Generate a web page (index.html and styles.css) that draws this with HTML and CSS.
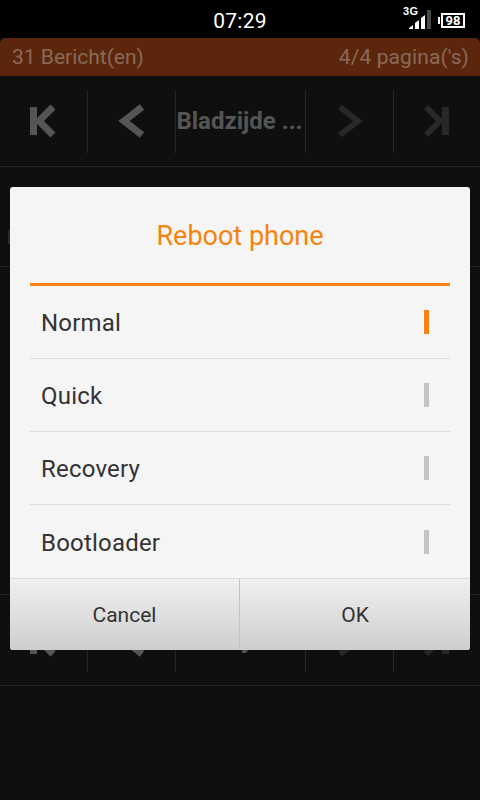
FILE: index.html
```html
<!DOCTYPE html>
<html lang="nl">
<head>
  <meta charset="UTF-8" />
  <meta name="viewport" content="width=device-width, initial-scale=1.0" />
  <title>Reboot phone</title>
  <link rel="stylesheet" href="styles.css">
</head>
<body>

  <div class="status-bar">
    <span class="clock">07:29</span>
    <div class="status-icons">
      <span class="net-type">3G</span>
      <svg class="signal" width="24" height="19" viewBox="0 0 24 19">
        <path d="M1 19v-1l4-3v4z" fill="#fff"/>
        <path d="M7 19v-6l4-3v9z" fill="#fff"/>
        <path d="M13 19V8l4-3v14z" fill="#fff"/>
        <rect x="19" y="0" width="4" height="19" fill="#4a4a4a"/>
      </svg>
      <div class="battery"><span>98</span></div>
    </div>
  </div>

  <div class="page-header">
    <span>31 Bericht(en)</span>
    <span class="page-count">4/4 pagina('s)</span>
  </div>

  <div class="pager">
    <div class="pager-btn">
      <svg class="icon" width="30" height="34" viewBox="0 0 30 34">
        <rect x="1" y="3" width="7" height="28" fill="#555"/>
        <path d="M24 3L10 17l14 14" class="stroke"/>
      </svg>
    </div>
    <div class="pager-btn">
      <svg class="icon" width="28" height="34" viewBox="0 0 28 34">
        <path d="M24 3L6 17l18 14" class="stroke"/>
      </svg>
    </div>
    <div class="pager-btn pager-label">Bladzijde ...</div>
    <div class="pager-btn dim">
      <svg class="icon" width="28" height="34" viewBox="0 0 28 34">
        <path d="M4 3l18 14L4 31" class="stroke"/>
      </svg>
    </div>
    <div class="pager-btn dim">
      <svg class="icon" width="30" height="34" viewBox="0 0 30 34">
        <rect x="20" y="3" width="7" height="28"/>
        <path d="M4 3l14 14L4 31" class="stroke"/>
      </svg>
    </div>
  </div>

  <div class="post"><span class="post-mark"></span></div>
  <div class="post post-tall"></div>

  <div class="pager">
    <div class="pager-btn">
      <svg class="icon" width="30" height="34" viewBox="0 0 30 34">
        <rect x="1" y="3" width="7" height="28" fill="#555"/>
        <path d="M24 3L10 17l14 14" class="stroke"/>
      </svg>
    </div>
    <div class="pager-btn">
      <svg class="icon" width="28" height="34" viewBox="0 0 28 34">
        <path d="M24 3L6 17l18 14" class="stroke"/>
      </svg>
    </div>
    <div class="pager-btn pager-label">Bladzijde ...</div>
    <div class="pager-btn dim">
      <svg class="icon" width="28" height="34" viewBox="0 0 28 34">
        <path d="M4 3l18 14L4 31" class="stroke"/>
      </svg>
    </div>
    <div class="pager-btn dim">
      <svg class="icon" width="30" height="34" viewBox="0 0 30 34">
        <rect x="20" y="3" width="7" height="28"/>
        <path d="M4 3l14 14L4 31" class="stroke"/>
      </svg>
    </div>
  </div>

  <div class="dialog">
    <div class="dialog-title">Reboot phone</div>
    <div class="options">
      <div class="option"><span class="option-text">Normal</span><span class="mark on"></span></div>
      <div class="option"><span class="option-text">Quick</span><span class="mark"></span></div>
      <div class="option"><span class="option-text">Recovery</span><span class="mark"></span></div>
      <div class="option"><span class="option-text">Bootloader</span><span class="mark"></span></div>
    </div>
    <div class="dialog-buttons">
      <div class="dialog-btn">Cancel</div>
      <div class="dialog-btn">OK</div>
    </div>
  </div>

</body>
</html>
```

FILE: styles.css
```css
* {
  box-sizing: border-box;
}
html, body {
  height: 100%;
}
body {
  margin: 0;
  position: relative;
  overflow: hidden;
  background: #0f0f0f;
  font-family: Roboto, "Liberation Sans", sans-serif;
  color: white;
}
.status-bar {
  height: 38px;
  background: #000;
  display: flex;
  justify-content: center;
  align-items: center;
  position: relative;
}
.clock {
  font-size: 21px;
  letter-spacing: 0.2px;
  padding-top: 4px;
}
.status-icons {
  position: absolute;
  right: 15px;
  top: 0;
  height: 38px;
  display: flex;
  align-items: flex-end;
  padding-bottom: 9px;
}
.net-type {
  position: absolute;
  left: -5px;
  top: 6px;
  font-family: "Liberation Sans", sans-serif;
  font-size: 11px;
  line-height: 11px;
  font-weight: 700;
  letter-spacing: 0.5px;
}
.signal {
  margin-right: 9px;
}
.battery {
  position: relative;
  width: 24px;
  height: 15px;
  margin-bottom: 1px;
  border: 2px solid #fff;
  display: flex;
  justify-content: center;
  align-items: center;
  font-size: 13px;
  font-weight: 700;
}
.battery::before {
  content: "";
  position: absolute;
  left: -5px;
  top: 2px;
  width: 2px;
  height: 7px;
  background: #fff;
}
.page-header {
  height: 38px;
  background: #5b260c;
  border-radius: 6px 6px 0 0;
  display: flex;
  justify-content: space-between;
  align-items: center;
  padding: 0 11px 0 12px;
  font-size: 21px;
  color: #8a6a58;
}
.page-count {
  letter-spacing: 0.1px;
}
.pager {
  height: 91px;
  display: flex;
  align-items: center;
  border-bottom: 1px solid #222;
}
.pager-btn {
  width: 88px;
  height: 63px;
  flex: none;
  display: flex;
  justify-content: center;
  align-items: center;
  border-right: 1px solid #282828;
}
.pager-label {
  width: 130px;
  padding-right: 2px;
  font-size: 24px;
  font-weight: 700;
  color: #555;
  white-space: nowrap;
}
.pager-btn:last-child {
  flex: 1;
  border-right: none;
}
.icon {
  fill: #282828;
}
.stroke {
  fill: none;
  stroke: #555;
  stroke-width: 7;
}
.dim .stroke {
  stroke: #282828;
  stroke-width: 6;
}
.post {
  height: 100px;
  display: flex;
  align-items: center;
  padding-left: 8px;
  border-bottom: 1px solid #222;
}
.post-mark {
  width: 2px;
  height: 14px;
  margin-top: 40px;
  background: #2a2a2a;
}
.post-tall {
  height: 328px;
}
.dialog {
  position: absolute;
  left: 10px;
  top: 187px;
  width: 460px;
  height: 463px;
  background: #f5f5f5;
  border-radius: 3px;
  display: flex;
  flex-direction: column;
}
.dialog-title {
  height: 99px;
  margin: 0 20px;
  padding-top: 1px;
  border-bottom: 3px solid #f7830f;
  display: flex;
  justify-content: center;
  align-items: center;
  font-size: 27px;
  color: #f7830f;
}
.options {
  flex: 1;
  margin: 0 20px;
}
.option {
  height: 73px;
  display: flex;
  justify-content: space-between;
  align-items: center;
  padding: 0 21px 0 11px;
  border-bottom: 1px solid #dcdcdc;
  font-size: 24px;
  line-height: 30px;
  letter-spacing: 0.2px;
  color: #333;
}
.option:last-child {
  border-bottom: none;
}
.option-text {
  padding-top: 2px;
}
.mark {
  width: 5px;
  height: 24px;
  background: #c4c4c4;
}
.mark.on {
  background: #fb8313;
}
.dialog-buttons {
  height: 72px;
  display: flex;
  border-top: 1px solid #dedede;
  background: linear-gradient(to bottom, #f0f0f0, #cecece);
  border-radius: 0 0 3px 3px;
}
.dialog-btn {
  flex: 1;
  display: flex;
  justify-content: center;
  align-items: center;
  font-size: 21px;
  color: #333;
}
.dialog-btn:first-child {
  flex: none;
  width: 230px;
  border-right: 1px solid #c4c4c4;
}
```
